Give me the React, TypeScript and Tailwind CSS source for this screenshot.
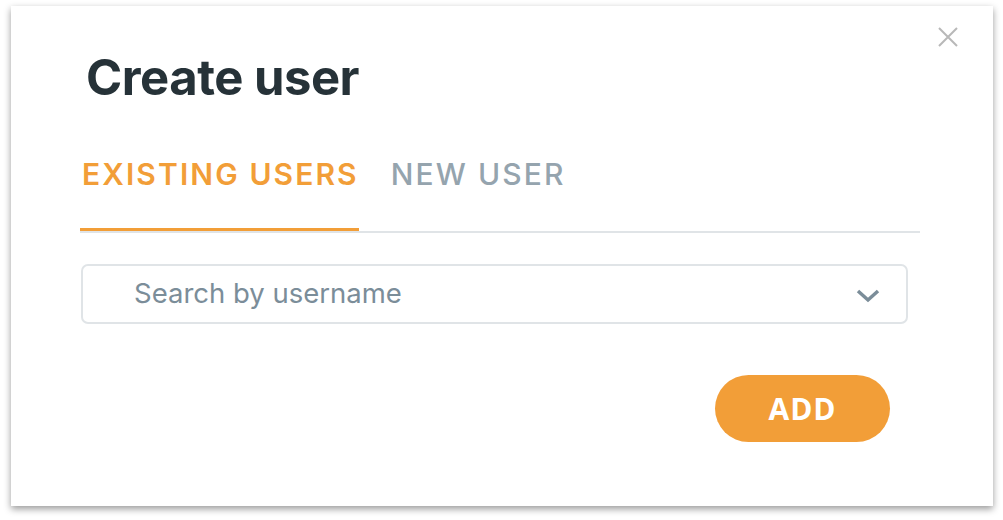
import { useState } from 'react'

// Create user modal — existing users tab active

const TABS = ['EXISTING USERS', 'NEW USER'] as const

export default function App() {
  const [tab, setTab] = useState<(typeof TABS)[number]>('EXISTING USERS')

  return (
    <div className="w-[1003px] h-[520px] bg-white pt-[6px] pl-[11px] font-['Inter',sans-serif]">
      <div className="relative w-[982px] h-[500px] bg-white shadow-[0_3px_7px_rgba(0,0,0,0.4)] pt-[47px] pl-[69px] pr-[73px]">
        <button className="absolute right-[33px] top-[19px] w-[24px] h-[24px] flex items-center justify-center" aria-label="Close">
          <svg viewBox="0 0 24 24" className="w-[24px] h-[24px]" fill="none" stroke="#b8b8b8" strokeWidth="2">
            <path d="M3 3 L21 21 M21 3 L3 21" />
          </svg>
        </button>

        <h1 className="ml-[6px] text-[49px] leading-none font-bold text-[#263238] tracking-[-0.01em]">Create user</h1>

        <div className="mt-[57px] flex gap-[30px] border-b-2 border-[#e0e4e7]">
          {TABS.map((t) => {
            const active = t === tab
            return (
              <button
                key={t}
                onClick={() => setTab(t)}
                className={
                  active
                    ? 'pl-[2px] pb-[39px] text-[30px] leading-none font-semibold tracking-[0.07em] text-[#f29e38] border-b-[3px] border-[#f29e38]'
                    : 'pl-[2px] pb-[39px] text-[30px] leading-none font-medium tracking-[0.07em] text-[#95a4ae] border-b-[3px] border-transparent'
                }
              >
                {t}
              </button>
            )
          })}
        </div>

        <div className="mt-[31px] ml-[1px] w-[827px] h-[60px] flex items-center justify-between rounded-[7px] border-2 border-[#e0e4e7] pl-[51px] pr-[26px]">
          <span className="text-[27.5px] text-[#7b8d99]">Search by username</span>
          <svg viewBox="0 0 24 16" className="w-[24px] h-[16px] mt-[4px]" fill="none" stroke="#7b8d99" strokeWidth="3.5">
            <path d="M2 3 L12 12 L22 3" />
          </svg>
        </div>

        <div className="mt-[51px] w-[827px] flex justify-end pr-[17px]">
          <button className="w-[175px] h-[67px] rounded-full bg-[#f29e38] text-white font-['Open_Sans',sans-serif] font-bold text-[30px] tracking-[0.03em]">
            ADD
          </button>
        </div>
      </div>
    </div>
  )
}
